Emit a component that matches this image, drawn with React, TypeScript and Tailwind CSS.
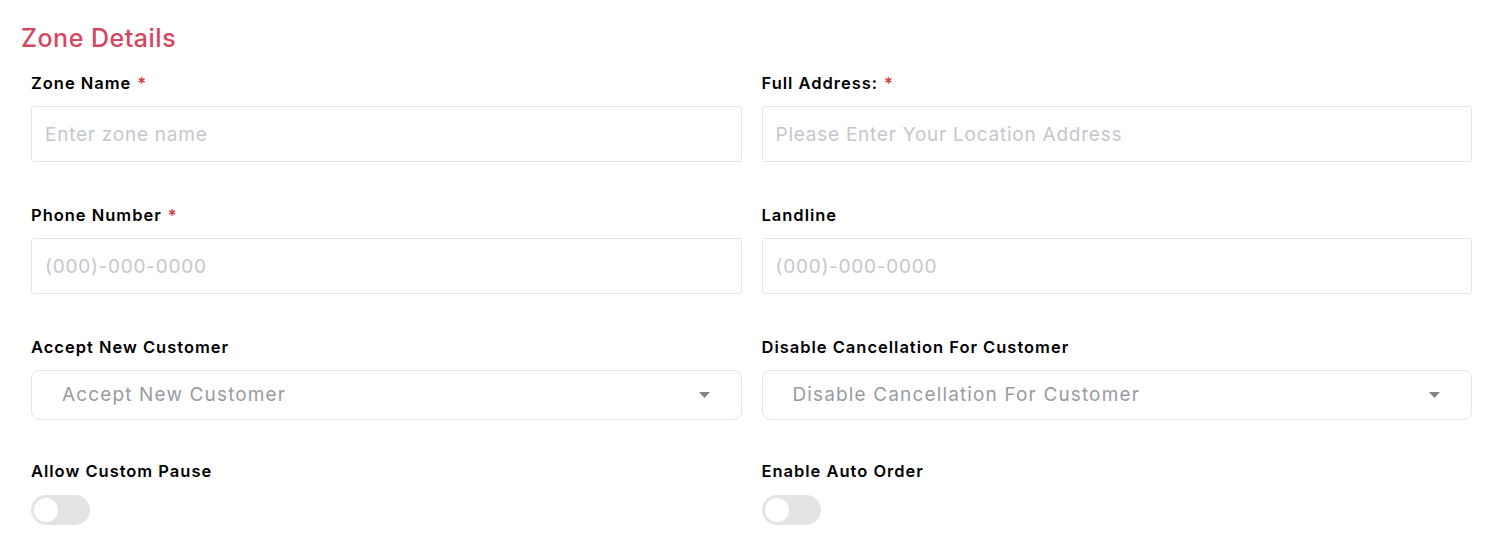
import React from "react";

const Label = ({ text, required }: { text: string; required?: boolean }) => (
  <label className="block text-[16.5px] leading-[22px] font-semibold tracking-[0.06em] text-black mb-3">
    {text}
    {required && <span className="text-[#dc3545] ml-1.5">*</span>}
  </label>
);

const TextField = ({ label, placeholder, required }: { label: string; placeholder: string; required?: boolean }) => (
  <div className="flex flex-col">
    <Label text={label} required={required} />
    <input
      placeholder={placeholder}
      className="h-[56px] w-full rounded-[3px] border border-[#e4e5e9] px-[13px] text-[19px] tracking-[0.04em] text-gray-700 outline-none placeholder:text-[#c5c7ce]"
    />
  </div>
);

const SelectField = ({ label }: { label: string }) => (
  <div className="flex flex-col">
    <Label text={label} />
    <div className="flex h-[50px] items-center justify-between rounded-lg border border-[#e4e5e9] pl-[30px] pr-[31px]">
      <span className="text-[19px] tracking-[0.06em] text-[#9a9ba2]">{label}</span>
      <svg width="11" height="6" viewBox="0 0 11 6">
        <path d="M0 0H11L5.5 6Z" fill="#858585" />
      </svg>
    </div>
  </div>
);

const Toggle = ({ label }: { label: string }) => (
  <div className="-mt-0.5 flex flex-col">
    <label className="block text-[16.5px] leading-[22px] font-semibold tracking-[0.06em] text-black mb-[13px]">{label}</label>
    <button className="relative h-[30px] w-[59px] rounded-full bg-[#e4e4e4]">
      <span className="absolute left-[3px] top-[3px] h-[24px] w-[24px] rounded-full bg-white" />
    </button>
  </div>
);

export default function App() {
  return (
    <div className="min-h-[538px] bg-white pt-[22px] font-['Inter',sans-serif]">
      <h2 className="pl-[21px] text-[25px] leading-[32px] font-medium tracking-[0.02em] text-[#d5475f]">Zone Details</h2>
      <div className="mt-[18px] grid grid-cols-2 gap-x-[20px] gap-y-[42px] pl-[31px] pr-[20px]">
        <TextField label="Zone Name" placeholder="Enter zone name" required />
        <TextField label="Full Address:" placeholder="Please Enter Your Location Address" required />
        <TextField label="Phone Number" placeholder="(000)-000-0000" required />
        <TextField label="Landline" placeholder="(000)-000-0000" />
        <SelectField label="Accept New Customer" />
        <SelectField label="Disable Cancellation For Customer" />
        <Toggle label="Allow Custom Pause" />
        <Toggle label="Enable Auto Order" />
      </div>
    </div>
  );
}
